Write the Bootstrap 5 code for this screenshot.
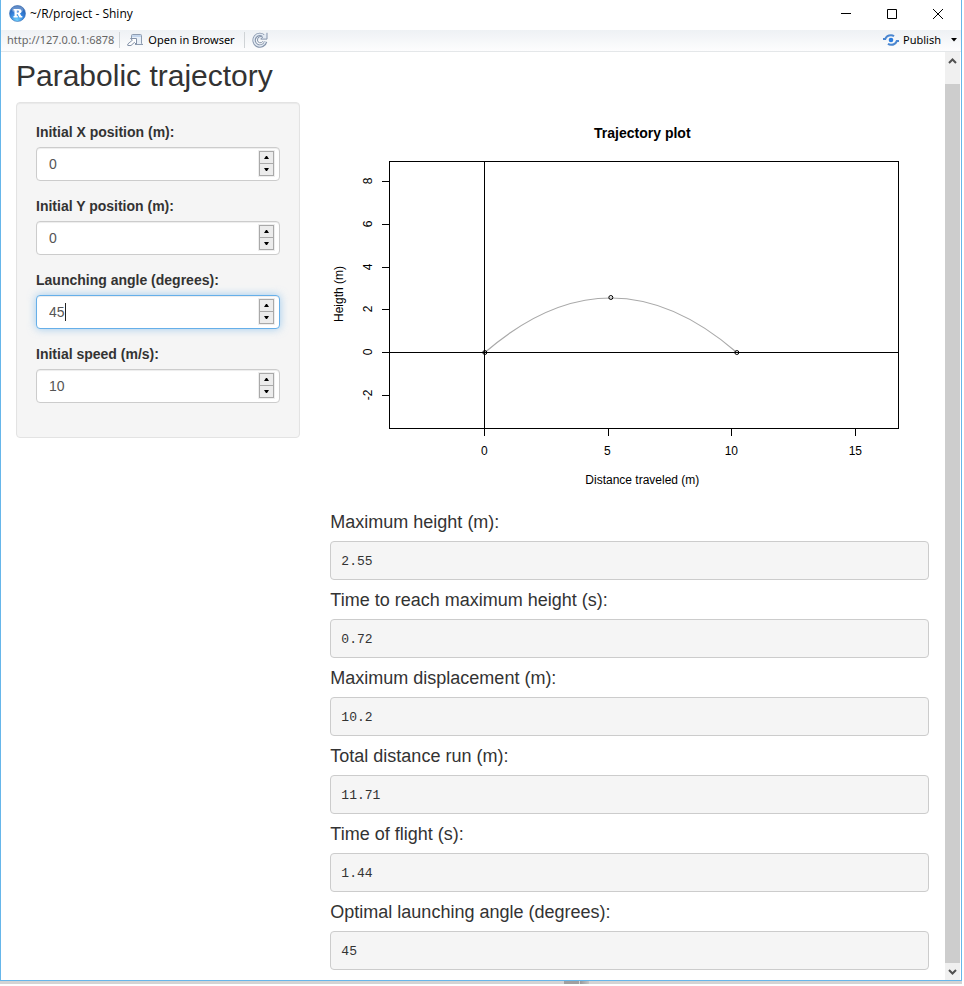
<!DOCTYPE html>
<html lang="en">
<head>
<meta charset="utf-8">
<meta name="viewport" content="width=device-width, initial-scale=1">
<title>~/R/project - Shiny</title>
<link href="https://cdn.jsdelivr.net/npm/bootstrap@5.3.0/dist/css/bootstrap.min.css" rel="stylesheet">
<style>
  body { font: 14px/20px "Liberation Sans", Arial, sans-serif; color: #333; background: #fff; }
  .app-window { border: 1px solid #66b6ea; border-top: 0; margin-right: 2px; }
  .chrome-text { font-family: "Noto Sans", "Open Sans", sans-serif; color: #000; }
  .title-bar { height: 30px; font-size: 12px; padding: 0 0 3px 8px; }
  .title-text { font-family: "Open Sans", "Noto Sans", sans-serif; margin-left: 4px; }
  .win-btn { width: 46px; height: 26px; padding: 0; border: 0; background: none; line-height: 1; }
  .tool-bar { height: 22px; font-size: 11px; line-height: 20px; background: linear-gradient(#eef1f4, #fdfdfe); border-bottom: 1px solid #e4e7e9; padding: 0 4px 1px 6px; }
  .tool-bar button { border: 0; background: none; padding: 0; color: #000; line-height: 20px; }
  .url-text { color: #666; }
  .tool-sep { width: 1px; height: 16px; background: #cfd3d6; margin: 0 7px 0 5px; }
  .tool-bar .publish-menu { margin-left: 10px; }
  .page-pane { --bs-gutter-x: 30px; padding-top: 7px; }
  .page-pane .row { --bs-gutter-x: 30px; }
  .page-pane h1 { font-size: 30px; line-height: 33px; margin: 0 0 10px; font-weight: 400; color: #333; }
  .side-well { background: #f5f5f5; border: 1px solid #e3e3e3; border-radius: 4px; padding: 19px; box-shadow: inset 0 1px 1px rgba(0,0,0,.05); }
  .side-well label { font-weight: 700; margin-bottom: 5px; display: block; }
  .num-field { border: 1px solid #ccc; border-radius: 4px; background: #fff; height: 34px; margin-bottom: 15px; padding: 0 5px 2px 0; box-shadow: inset 0 1px 1px rgba(0,0,0,.075); }
  .num-field.is-active { border-color: #66afe9; box-shadow: inset 0 1px 1px rgba(0,0,0,.075), 0 0 8px rgba(102,175,233,.6); }
  .num-field input { border: 0; background: none; outline: 0; color: #555; font-size: 14px; line-height: 20px; padding: 8px 12px 6px; min-width: 0; appearance: textfield; -moz-appearance: textfield; }
  .num-field input::-webkit-inner-spin-button { appearance: none; -webkit-appearance: none; margin: 0; }
  .text-caret { left: 28px; top: 7px; width: 1px; height: 18px; background: #222; }
  .spin { width: 15px; border: 1px solid #a9a9a9; background: #a9a9a9; gap: 1px; height: 25px; box-shadow: 0 0 0 1px #eee; }
  .spin button { flex: 1; border: 0; padding: 0; background: #ececec; line-height: 0; }
  .spin svg { display: block; margin: auto; }
  .plot { width: 100%; height: 400px; display: block; margin-bottom: 10px; }
  .plot text { font: 12px "Liberation Sans", Arial, sans-serif; fill: #000; text-anchor: middle; }
  .plot .plot-title { font-size: 14px; font-weight: 700; }
  .axis-line { stroke: #000; fill: none; shape-rendering: crispEdges; }
  .result h2 { font-size: 18px; line-height: 20px; margin: 0 0 9px; font-weight: 400; color: #333; }
  .result pre { font: 13px/19px "Liberation Mono", "Courier New", monospace; color: #333; background: #f5f5f5; border: 1px solid #ccc; border-radius: 4px; padding: 10px 10px 8px; margin: 0 0 10px; }
  .scroll-rail { width: 15px; background: #f0f0f0; margin: 0 1px; }
  .scroll-rail button { border: 0; background: none; padding: 0; line-height: 0; }
  .rail-up { height: 32px; padding-bottom: 14px !important; }
  .rail-down { height: 17px; }
  .rail-thumb { background: #cdcdcd; }
  .under-strip { height: 3px; background: #d4d4d4; margin: 0 2px 2px 0; }
  .under-strip i { height: 3px; }
  .strip-a { width: 15px; background: #a0a0a0; margin-left: 564px; }
  .strip-b { width: 9px; background: linear-gradient(90deg, #999, #c4c4c4); margin-left: 1px; }
</style>
<script src="https://cdn.jsdelivr.net/npm/bootstrap@5.3.0/dist/js/bootstrap.bundle.min.js"></script>
</head>
<body>
<div class="app-window">
  <header class="title-bar chrome-text d-flex align-items-center">
    <svg width="17" height="17" viewBox="0 0 17 17" aria-hidden="true">
      <defs><radialGradient id="ball" cx=".45" cy=".9" r=".9"><stop offset="0" stop-color="#6fd0fb"/><stop offset=".5" stop-color="#3583dc"/><stop offset="1" stop-color="#2358a8"/></radialGradient></defs>
      <circle cx="8.500" cy="8.500" r="8" fill="url(#ball)" stroke="#3a6eb4" stroke-width=".6"/>
      <ellipse cx="8.500" cy="4.500" rx="6" ry="3.500" fill="#fff" opacity=".28"/>
      <path d="M4.500 4h5.200q2.800 0 2.800 2.400 0 1.600-1.600 2.100l1.500 2.600h.9v1.400H10.500L8.500 9H7.800v2.100h1v1.400H4.500v-1.400h1V5.400h-1zM7.800 5.500v2.200h1.200q1.100 0 1.100-1.100T9 5.500z" fill="#fff" fill-rule="evenodd"/>
    </svg>
    <span class="title-text me-auto">~/R/project - Shiny</span>
    <button class="win-btn" type="button" aria-label="Minimize"><svg width="10" height="10" viewBox="0 0 10 10"><path d="M0 4.500h10" stroke="#000"/></svg></button>
    <button class="win-btn" type="button" aria-label="Maximize"><svg width="10" height="10" viewBox="0 0 10 10"><path d="M.5.500h9v9h-9z" stroke="#000" fill="none"/></svg></button>
    <button class="win-btn" type="button" aria-label="Close"><svg width="10" height="10" viewBox="0 0 10 10"><path d="M0 0l10 10M10 0L0 10" stroke="#000"/></svg></button>
  </header>
  <nav class="tool-bar chrome-text d-flex align-items-center" aria-label="Viewer">
    <span class="url-text">http://127.0.0.1:6878</span>
    <span class="tool-sep"></span>
    <button type="button" class="d-flex align-items-center gap-1 me-1">
      <svg width="17" height="14" viewBox="0 0 17 14" aria-hidden="true">
        <path d="M4.500 6V2.500q0-1 1-1h8q1 0 1 1v7.900q0 1.100 1.500 1.100H8" fill="#e9f0f8" stroke="#8e9cb0"/>
        <path d="M5 2h9v2H5z" fill="#c3d5ec"/>
        <path d="M3.500 5.500h6v6L7.400 9.400 4 12.500H.8V11l4.600-3.800z" fill="#fff" stroke="#8492a8"/>
      </svg>
      <span>Open in Browser</span>
    </button>
    <span class="tool-sep"></span>
    <button type="button" class="me-auto" aria-label="Reload">
      <svg class="d-block" width="16" height="16" viewBox="0 0 16 16" aria-hidden="true">
        <path d="M12.300 4.500A5.800 5.800 0 1 0 13.600 9.600" fill="none" stroke="#8594ab" stroke-width="3.400"/>
        <path d="M12.300 4.500A5.800 5.800 0 1 0 13.400 9.600" fill="none" stroke="#e3eaf3" stroke-width="1.500"/>
        <path d="M15 .8v6.300H8.700l2-2A3.300 3.300 0 0 0 5.500 8" fill="#e3eaf3" stroke="#8594ab"/>
        <path d="M5.400 8a2.900 2.900 0 0 0 5.500 1.200" fill="none" stroke="#8594ab"/>
      </svg>
    </button>
    <button type="button" class="d-flex align-items-center gap-1">
      <svg width="16" height="12" viewBox="0 0 16 12" aria-hidden="true">
        <circle cx="8" cy="6" r="2.300" fill="#2b7de0"/>
        <path d="M0 5h2.200Q3.800 1.200 8 1.200q1.800 0 3 1M16 7h-2.200Q12.200 10.800 8 10.800q-1.800 0-3-1" fill="none" stroke="#4a86d0" stroke-width="2"/>
      </svg>
      <span>Publish</span>
    </button>
    <button type="button" class="publish-menu" aria-label="Publish options"><svg class="d-block" width="6" height="4" viewBox="0 0 6 4"><path d="M0 0h6L3 3.500z"/></svg></button>
  </nav>

  <div class="d-flex">
    <main class="page-pane container-fluid flex-grow-1">
      <h1>Parabolic trajectory</h1>
      <div class="row">
        <div class="col-4">
          <form class="side-well">
            <label for="x0">Initial X position (m):</label>
            <div class="num-field d-flex align-items-center">
              <input class="flex-grow-1" id="x0" type="number" value="0">
              <div class="spin d-flex flex-column">
                <button type="button" aria-label="Increase X"><svg width="5" height="3" viewBox="0 0 5 3"><path d="M0 3h5L3 0H2z"/></svg></button>
                <button type="button" aria-label="Decrease X"><svg width="5" height="3" viewBox="0 0 5 3"><path d="M0 0h5L3 3H2z"/></svg></button>
              </div>
            </div>
            <label for="y0">Initial Y position (m):</label>
            <div class="num-field d-flex align-items-center">
              <input class="flex-grow-1" id="y0" type="number" value="0">
              <div class="spin d-flex flex-column">
                <button type="button" aria-label="Increase Y"><svg width="5" height="3" viewBox="0 0 5 3"><path d="M0 3h5L3 0H2z"/></svg></button>
                <button type="button" aria-label="Decrease Y"><svg width="5" height="3" viewBox="0 0 5 3"><path d="M0 0h5L3 3H2z"/></svg></button>
              </div>
            </div>
            <label for="angle">Launching angle (degrees):</label>
            <div class="num-field is-active d-flex align-items-center position-relative">
              <input class="flex-grow-1" id="angle" type="number" value="45">
              <span class="text-caret position-absolute"></span>
              <div class="spin d-flex flex-column">
                <button type="button" aria-label="Increase angle"><svg width="5" height="3" viewBox="0 0 5 3"><path d="M0 3h5L3 0H2z"/></svg></button>
                <button type="button" aria-label="Decrease angle"><svg width="5" height="3" viewBox="0 0 5 3"><path d="M0 0h5L3 3H2z"/></svg></button>
              </div>
            </div>
            <label for="speed">Initial speed (m/s):</label>
            <div class="num-field d-flex align-items-center">
              <input class="flex-grow-1" id="speed" type="number" value="10">
              <div class="spin d-flex flex-column">
                <button type="button" aria-label="Increase speed"><svg width="5" height="3" viewBox="0 0 5 3"><path d="M0 3h5L3 0H2z"/></svg></button>
                <button type="button" aria-label="Decrease speed"><svg width="5" height="3" viewBox="0 0 5 3"><path d="M0 0h5L3 3H2z"/></svg></button>
              </div>
            </div>
          </form>
        </div>
        <div class="col-8">
          <svg class="plot" viewBox="-1 0 598 400" role="img" aria-label="Trajectory plot">
            <text class="plot-title" x="311" y="36">Trajectory plot</text>
            <path d="M153.500 250.500Q279.500 141.500 405.500 250.500" fill="none" stroke="#a9a9a9" stroke-width="1.200"/>
            <g class="axis-line">
              <path d="M58.500 59.500h509v267h-509z"/>
              <path d="M153.500 59.500v274M50.500 250.500h517"/>
              <path d="M277.500 326.500v7M400.500 326.500v7M524.500 326.500v7"/>
              <path d="M50.500 79.500h8M50.500 122.500h8M50.500 165.500h8M50.500 207.500h8M50.500 293.500h8"/>
            </g>
            <g fill="none" stroke="#000">
              <circle cx="153.500" cy="250.500" r="2"/><circle cx="279.500" cy="195.500" r="2"/><circle cx="405.500" cy="250.500" r="2"/>
            </g>
            <text x="153" y="353">0</text><text x="276" y="353">5</text><text x="400" y="353">10</text><text x="524" y="353">15</text>
            <text x="311" y="382">Distance traveled (m)</text>
            <g transform="rotate(-90)">
              <text x="-79" y="41">8</text><text x="-122" y="41">6</text><text x="-165" y="41">4</text><text x="-207" y="41">2</text><text x="-250" y="41">0</text><text x="-293" y="41">-2</text>
              <text x="-192" y="12">Heigth (m)</text>
            </g>
          </svg>
          <section class="result"><h2>Maximum height (m):</h2><pre>2.55</pre></section>
          <section class="result"><h2>Time to reach maximum height (s):</h2><pre>0.72</pre></section>
          <section class="result"><h2>Maximum displacement (m):</h2><pre>10.2</pre></section>
          <section class="result"><h2>Total distance run (m):</h2><pre>11.71</pre></section>
          <section class="result"><h2>Time of flight (s):</h2><pre>1.44</pre></section>
          <section class="result"><h2>Optimal launching angle (degrees):</h2><pre>45</pre></section>
        </div>
      </div>
    </main>
    <div class="scroll-rail d-flex flex-column flex-shrink-0">
      <button class="rail-up" type="button" aria-label="Scroll up"><svg width="9" height="6" viewBox="0 0 9 6"><path d="M1 5l3.500-3.500L8 5" fill="none" stroke="#505050" stroke-width="2"/></svg></button>
      <div class="rail-thumb flex-grow-1"></div>
      <button class="rail-down" type="button" aria-label="Scroll down"><svg width="9" height="6" viewBox="0 0 9 6"><path d="M1 1l3.500 3.500L8 1" fill="none" stroke="#505050" stroke-width="2"/></svg></button>
    </div>
  </div>
</div>
<div class="under-strip d-flex"><i class="strip-a"></i><i class="strip-b"></i></div>
</body>
</html>
